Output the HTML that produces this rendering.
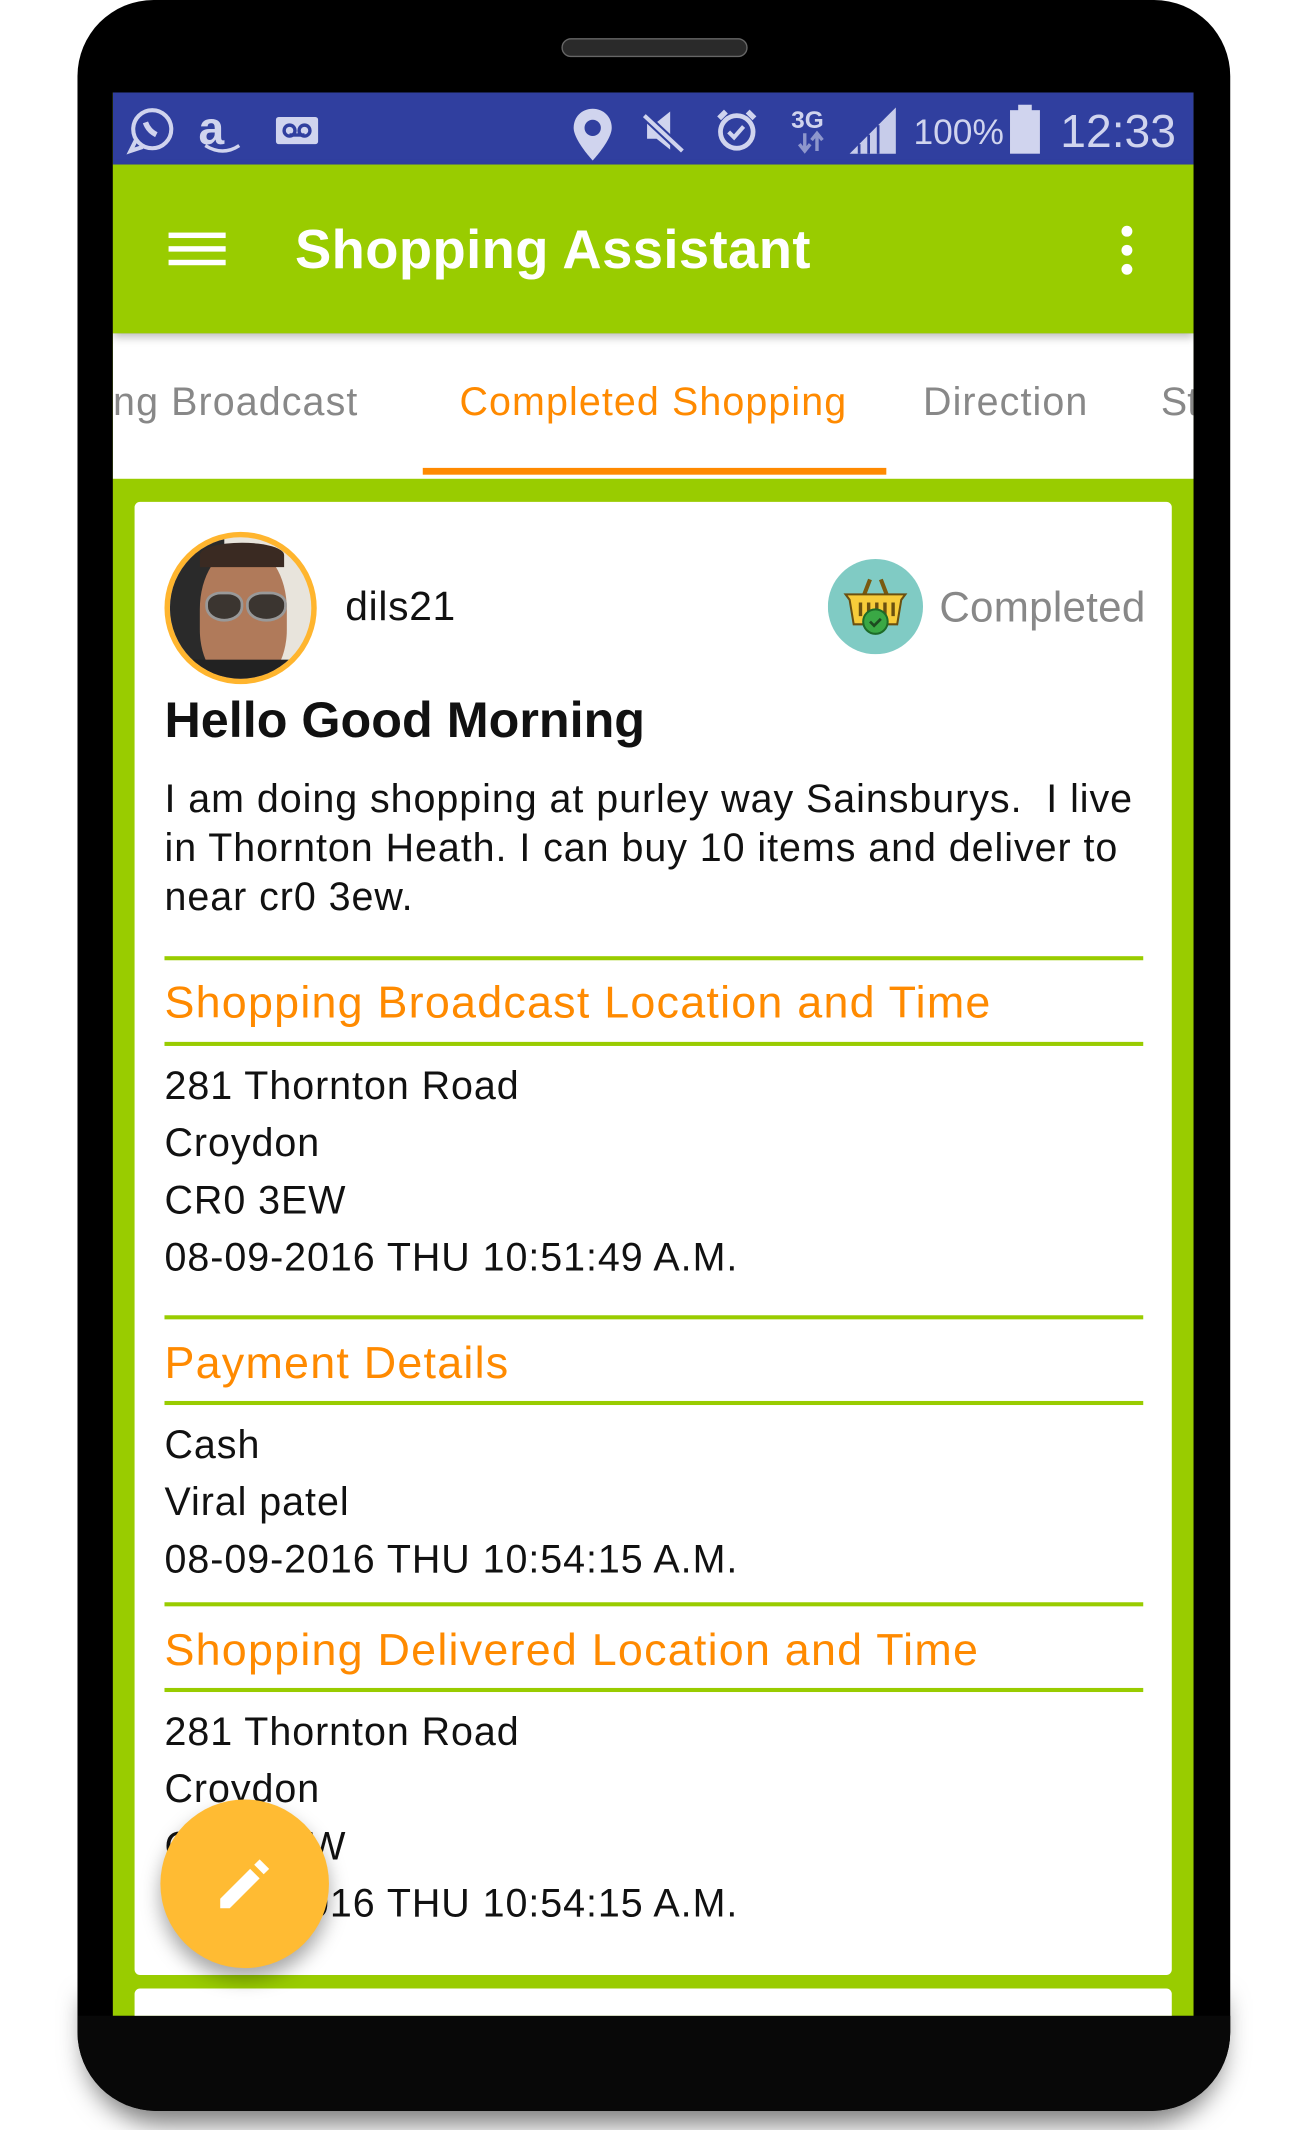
<!DOCTYPE html>
<html><head><meta charset="utf-8"><style>
html,body{margin:0;padding:0;background:#fff;width:1305px;height:2130px;overflow:hidden}
#w{position:absolute;left:0;top:0;width:960px;height:1566px;transform:scale(1.359375,1.36015);transform-origin:0 0;font-family:"Liberation Sans",sans-serif}
.a{position:absolute}
.t{position:absolute;white-space:nowrap;line-height:1}
.ln{position:absolute;left:121px;width:720px;height:3px;background:#99cc00}
.h{color:#ff8a00;font-size:33px;letter-spacing:0.9px}
.b{color:#111;font-size:29px;letter-spacing:0.7px}
</style></head><body><div id="w">
<div class="a" style="left:62px;top:1460px;width:838px;height:92px;border-radius:0 0 58px 58px;box-shadow:0 10px 18px rgba(0,0,0,.5)"></div>
<div class="a" style="left:57px;top:0;width:848px;height:1552px;background:#000;border-radius:56px 56px 58px 58px"></div>
<div class="a" style="left:57px;top:1482px;width:848px;height:70px;background:#080808;border-radius:0 0 58px 58px"></div>
<div class="a" style="left:413px;top:28px;width:135px;height:12px;background:#2a2a2a;border:1px solid #666;border-radius:7px"></div>
<!-- screen -->
<div class="a" style="left:83px;top:68px;width:795px;height:1414px;background:#99cc00;overflow:hidden">
 <div class="a" style="left:0;top:0;width:795px;height:53px;background:#303f9f"></div>
 <svg class="a" style="left:0;top:0" width="795" height="53" viewBox="0 0 795 53">
  <g fill="none" stroke="#d0d4ee" stroke-width="3">
   <circle cx="29" cy="27" r="14"/><path d="M17 35 L13 43 L22 40"/>
   <path d="M24 22q2 6 8 9" stroke-width="4"/>
   <path d="M68 39q13 8 25 0" stroke-width="2.5"/>
  </g>
  <rect x="120" y="18" width="31" height="20" rx="2" fill="#d0d4ee"/>
  <circle cx="130" cy="28" r="4" fill="none" stroke="#303f9f" stroke-width="2.5"/><circle cx="141" cy="28" r="4" fill="none" stroke="#303f9f" stroke-width="2.5"/><rect x="130" y="30" width="11" height="2.5" fill="#303f9f"/>
  <text x="63" y="38" font-family="Liberation Sans" font-size="34" font-weight="bold" fill="#d0d4ee">a</text>
  <path d="M353 12c-8 0-14 6-14 14c0 9 14 24 14 24s14-15 14-24c0-8-6-14-14-14z" fill="#d0d4ee"/><circle cx="353" cy="26" r="6" fill="#303f9f"/>
  <path d="M393 22h7l10-8v28l-10-8h-7z" fill="#d0d4ee"/><path d="M390 16l30 28" stroke="#303f9f" stroke-width="6"/><path d="M391 17l28 26" stroke="#d0d4ee" stroke-width="3"/>
  <circle cx="459" cy="29" r="12" fill="none" stroke="#d0d4ee" stroke-width="3.5"/><path d="M453 29l4 4l7-8" stroke="#d0d4ee" stroke-width="3" fill="none"/><path d="M446 19l5-5M472 19l-5-5" stroke="#d0d4ee" stroke-width="4"/>
  <text x="499" y="26" font-family="Liberation Sans" font-size="18" font-weight="bold" fill="#d0d4ee">3G</text>
  <path d="M509 30v12M505 38l4 5l4-5M518 43v-12M514 35l4-5l4 5" stroke="#8e97cc" stroke-width="2.5" fill="none"/>
  <path d="M542 45l34-34v34z" fill="#d0d4ee" opacity=".95"/><path d="M549 45v-7M556 45v-14M563 45v-21" stroke="#303f9f" stroke-width="2"/>
  <text x="589" y="38" font-family="Liberation Sans" font-size="26" fill="#d0d4ee">100%</text>
  <rect x="660" y="13" width="22" height="32" fill="#d0d4ee"/><rect x="666" y="9" width="10" height="5" fill="#d0d4ee"/>
  <text x="697" y="40" font-family="Liberation Sans" font-size="34" fill="#d0d4ee">12:33</text>
 </svg>
 <div class="a" style="left:0;top:53px;width:795px;height:124px;background:#99cc00;box-shadow:0 3px 6px rgba(0,0,0,.25);z-index:2"></div>
 <div class="a" style="z-index:3;left:41px;top:103px;width:42px;height:4px;background:#fff;box-shadow:0 10px 0 #fff,0 20px 0 #fff"></div>
 <div class="t" style="z-index:3;left:134px;top:96px;font-size:40px;color:#fff;font-weight:bold;letter-spacing:0.3px">Shopping Assistant</div>
 <div class="a" style="z-index:3;left:742px;top:98px;width:8px;height:8px;border-radius:4px;background:#fff;box-shadow:0 14px 0 #fff,0 28px 0 #fff"></div>
 <div class="a" style="left:0;top:177px;width:795px;height:107px;background:#fff"></div>
 <div class="t" style="left:-24px;top:214px;font-size:29px;color:#888;letter-spacing:0.8px">ping Broadcast</div>
 <div class="t" style="left:255px;top:214px;font-size:29px;color:#ff8a00;letter-spacing:0.8px">Completed Shopping</div>
 <div class="t" style="left:596px;top:214px;font-size:29px;color:#888;letter-spacing:0.8px">Direction</div>
 <div class="t" style="left:771px;top:214px;font-size:29px;color:#888">St</div>
 <div class="a" style="left:228px;top:276px;width:341px;height:5px;background:#ff8a00"></div>
</div>
<div class="a" style="left:99px;top:369px;width:763px;height:1083px;background:#fff;border-radius:4px"></div>
<div class="a" style="left:99px;top:1462px;width:763px;height:20px;background:#fff;border-radius:4px 4px 0 0"></div>
<div class="a" style="left:121px;top:391px;width:104px;height:104px;border-radius:50%;border:4px solid #ffb52e;overflow:hidden;background:#e8e4dc">
 <div class="a" style="left:0;top:0;width:40px;height:104px;background:#2a2a2a"></div>
 <div class="a" style="left:22px;top:8px;width:64px;height:100px;border-radius:45% 45% 40% 40%;background:#b07a5a"></div>
 <div class="a" style="left:22px;top:4px;width:62px;height:18px;border-radius:50% 50% 0 0;background:#3a2a22"></div>
 <div class="a" style="left:26px;top:40px;width:24px;height:18px;border-radius:40% 40% 50% 50%;background:#3b3530;border:2px solid #999"></div>
 <div class="a" style="left:56px;top:40px;width:26px;height:18px;border-radius:40% 40% 50% 50%;background:#3b3530;border:2px solid #999"></div>
 <div class="a" style="left:0;top:90px;width:104px;height:20px;background:#222"></div>
</div>
<div class="t" style="left:254px;top:432px;font-size:30px;color:#111;letter-spacing:0.5px">dils21</div>
<svg class="a" style="left:609px;top:411px" width="70" height="70" viewBox="0 0 70 70">
 <circle cx="35" cy="35" r="35" fill="#80cbc4"/>
 <path d="M26 28l5-13M44 28l-5-13" stroke="#7a5a10" stroke-width="3"/>
 <path d="M13 26h44l-3 4l-3 18h-32l-3-18z" fill="#f7cc3a" stroke="#6b5010" stroke-width="1.5"/>
 <path d="M24 32v10M30 32v10M36 32v10M42 32v10M48 32v10" stroke="#6b5010" stroke-width="2.5"/>
 <circle cx="35" cy="46" r="9" fill="#3aa845" stroke="#1d6b28" stroke-width="1.5"/><path d="M31 46l3 3l5-5" stroke="#1d4b20" stroke-width="2" fill="none"/>
</svg>
<div class="t" style="left:691px;top:431px;font-size:31px;color:#888;letter-spacing:0.2px">Completed</div>
<div class="t" style="left:121px;top:511px;font-size:37px;font-weight:bold;color:#111">Hello Good Morning</div>
<div class="t b" style="left:121px;top:574px">I am doing shopping at purley way Sainsburys.&nbsp; I live</div>
<div class="t b" style="left:121px;top:610px">in Thornton Heath. I can buy 10 items and deliver to</div>
<div class="t b" style="left:121px;top:646px">near cr0 3ew.</div>
<div class="ln" style="top:703px"></div>
<div class="t h" style="left:121px;top:720px">Shopping Broadcast Location and Time</div>
<div class="ln" style="top:766px"></div>
<div class="t b" style="left:121px;top:785px">281 Thornton Road</div>
<div class="t b" style="left:121px;top:827px">Croydon</div>
<div class="t b" style="left:121px;top:869px">CR0 3EW</div>
<div class="t b" style="left:121px;top:911px">08-09-2016 THU 10:51:49 A.M.</div>
<div class="ln" style="top:967px"></div>
<div class="t h" style="left:121px;top:985px">Payment Details</div>
<div class="ln" style="top:1030px"></div>
<div class="t b" style="left:121px;top:1049px">Cash</div>
<div class="t b" style="left:121px;top:1091px">Viral patel</div>
<div class="t b" style="left:121px;top:1133px">08-09-2016 THU 10:54:15 A.M.</div>
<div class="ln" style="top:1178px"></div>
<div class="t h" style="left:121px;top:1196px">Shopping Delivered Location and Time</div>
<div class="ln" style="top:1241px"></div>
<div class="t b" style="left:121px;top:1260px">281 Thornton Road</div>
<div class="t b" style="left:121px;top:1302px">Croydon</div>
<div class="t b" style="left:121px;top:1344px">CR0 3EW</div>
<div class="t b" style="left:121px;top:1386px">08-09-2016 THU 10:54:15 A.M.</div>
<div class="a" style="left:118px;top:1323px;width:124px;height:124px;border-radius:50%;background:#ffbb33;box-shadow:0 8px 14px rgba(0,0,0,.35)"></div>
<svg class="a" style="left:150px;top:1355px" width="60" height="60" viewBox="0 0 60 60">
 <path d="M12 48v-7l22-22l7 7l-22 22z M37 16l4-4l7 7l-4 4z" fill="#fff"/>
</svg>
</div></body></html>
